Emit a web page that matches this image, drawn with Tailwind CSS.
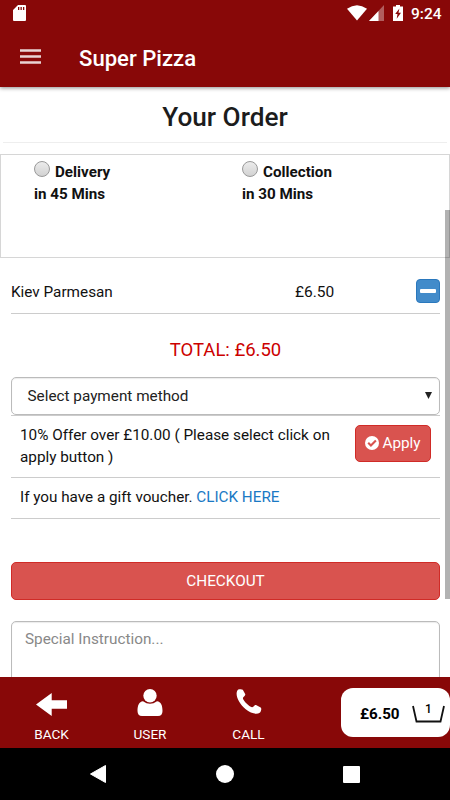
<!DOCTYPE html>
<html lang="en">
<head>
<meta charset="utf-8">
<title>Super Pizza</title>
<script src="https://cdn.jsdelivr.net/npm/@tailwindcss/browser@4"></script>
</head>
<body class="w-[450px] h-[800px] overflow-hidden bg-white text-[#111] font-[Roboto,sans-serif] text-[16px] leading-[22px]">
<div class="relative flex flex-col w-[450px] h-[800px] overflow-hidden">
  <header class="relative z-10 h-[87px] shrink-0 bg-[#880808] text-white shadow-[0_1px_4px_rgba(0,0,0,0.45)]">
    <div class="flex h-[27px] items-center justify-between pl-[13px] pr-[8px]">
      <svg class="w-[13px] h-[16px] -mt-px" viewBox="0 0 13 16"><path fill="#fff" fill-rule="evenodd" d="M5 0h7a1 1 0 0 1 1 1v14a1 1 0 0 1-1 1H1a1 1 0 0 1-1-1V5zM5 2v3h1.300V2zM7.500 2v3h1.300V2zM10 2v3h1.300V2z"/></svg>
      <div class="flex items-center -mt-px">
        <svg class="w-[20px] h-[16px]" viewBox="0 0 20 16"><path fill="#fff" d="M0 3.800Q10-3.500 20 3.800L10 15.500z"/></svg>
        <svg class="w-[15px] h-[16px] ml-[2px]" viewBox="0 0 15 16"><path fill="#fff" fill-opacity=".35" d="M15 0v16H0z"/><path fill="#fff" d="M9.500 6v10H0z"/></svg>
        <svg class="w-[10px] h-[16px] ml-[9px]" viewBox="0 0 10 16"><path fill="#fff" d="M3 0h4v1.500h3V16H0V1.500h3z"/><path fill="#880808" d="M6.400 3.500 2.200 9h2.300l-.8 4.700L8 7.800H5.500z"/></svg>
        <span class="ml-[8px] mt-[2px] w-[31px] text-[15.500px] font-medium whitespace-nowrap">9:24</span>
      </div>
    </div>
    <div class="flex h-[60px] items-center pl-[20px]">
      <svg class="w-[21px] h-[15px] -mt-px" viewBox="0 0 21 15"><path stroke="#e9d3d3" stroke-width="2.400" d="M0 1.500h21M0 7.500h21M0 13.500h21"/></svg>
      <h1 class="ml-[38px] mt-[2px] text-[22.100px] leading-[28px] font-medium">Super Pizza</h1>
    </div>
  </header>

  <main class="flex-1 min-h-0 overflow-hidden">
    <h2 class="mx-[3px] h-[56px] border-b border-[#eee] pt-[14px] text-center text-[26.200px] leading-[32px] font-medium text-[#1c1c1c]">Your Order</h2>
    <section class="mt-[11px] h-[104px] flex border border-[#d6d6d6] pl-[33px] pt-[6px] font-bold text-[15.200px]">
      <div class="w-[208px]">
        <div class="flex"><span class="size-[16px] rounded-full border border-[#999] bg-linear-to-b from-[#ececec] to-[#d2d2d2] mr-[5px]"></span><span>Delivery</span></div>
        <p>in 45 Mins</p>
      </div>
      <div>
        <div class="flex"><span class="size-[16px] rounded-full border border-[#999] bg-linear-to-b from-[#ececec] to-[#d2d2d2] mr-[5px]"></span><span>Collection</span></div>
        <p>in 30 Mins</p>
      </div>
    </section>
    <div class="ml-[11px] mr-[10px]">
      <div class="flex h-[56px] pt-[21px] items-start justify-between border-b border-[#ccc] text-[15.300px]">
        <span class="w-[284px] mt-[2px]">Kiev Parmesan</span>
        <span class="w-[121px] mt-[2px] text-[15.500px]">£6.50</span>
        <button class="flex w-[24px] h-[24px] items-center justify-center rounded-[4px] border border-[#2a78bd] bg-[#428bca]"><span class="h-[4px] w-[16px] rounded-[1px] bg-white"></span></button>
      </div>
      <p class="h-[63px] pt-[24px] text-center text-[18.500px] leading-[24px] text-[#cc0000]">TOTAL: £6.50</p>
      <div class="flex h-[38px] items-center justify-between rounded-[5px] border border-[#bbb] pb-px pl-[15.500px] pr-[7px] text-[15.300px] text-[#222] shadow-[inset_0_1px_1px_rgba(0,0,0,0.08)]">
        <span>Select payment method</span>
        <svg class="w-[7px] h-[7px]" viewBox="0 0 7 7"><path fill="#222" d="M0 0h7L3.500 7z"/></svg>
      </div>
      <div class="flex h-[63px] justify-between border-y border-[#ccc] pl-[9px] pr-[9px] pt-[8px] text-[15.300px]">
        <p class="w-[322px] whitespace-nowrap">10% Offer over £10.00 ( Please select click on<br>apply button )</p>
        <button class="mt-px flex h-[37px] w-[76px] items-center justify-center gap-[3px] rounded-[5px] border border-[#d02b27] bg-[#d9534f] pb-[2px] text-white">
          <svg class="w-[14px] h-[14px]" viewBox="0 0 14 14"><circle cx="7" cy="7" r="7" fill="#fff"/><path d="m3.200 6.800 2.700 2.700 5-5" fill="none" stroke="#d9534f" stroke-width="2.100"/></svg>
          <span>Apply</span>
        </button>
      </div>
      <p class="h-[41px] border-b border-[#ccc] pl-[9px] pt-[8px] text-[15.250px]">If you have a gift voucher. <a class="text-[#1a79c4]">CLICK HERE</a></p>
      <button class="mt-[43px] flex h-[38px] w-full items-center justify-center rounded-[5px] border border-[#d02b27] bg-[#d9534f] pb-px text-[15.300px] text-white">CHECKOUT</button>
      <div class="mt-[21px] h-[80px] rounded-[5px] border border-[#bbb] pl-[13px] pt-[6px] text-[15.300px] text-[#888] shadow-[inset_0_1px_1px_rgba(0,0,0,0.08)]">Special Instruction...</div>
    </div>
  </main>

  <footer class="flex h-[71px] shrink-0 bg-[#880808] text-white text-[13.600px] leading-[18px]">
    <div class="flex w-[103px] flex-col items-center pt-[12px]">
      <svg class="w-[31px] h-[30px]" viewBox="0 0 31 30"><path fill="#fff" d="M0 15.500 15.700 4v7.200H31v8.600H15.700V27z"/></svg>
      <span class="mt-[6px]">BACK</span>
    </div>
    <div class="flex w-[94px] flex-col items-center pt-[12px]">
      <svg class="w-[26px] h-[28px]" viewBox="0 0 26 28"><circle cx="13" cy="6.700" r="6.700" fill="#fff"/><path fill="#fff" d="M6 12.200Q13 17.300 20 12.200C24 12.500 25.500 16.500 25.500 22 25.500 25 24 27 21 27H5C2 27 .5 25 .5 22 .5 16.500 2 12.500 6 12.200z"/></svg>
      <span class="mt-[8px]">USER</span>
    </div>
    <div class="flex w-[103px] flex-col items-center pt-[12px]">
      <svg class="w-[26px] h-[26px]" viewBox="0 0 26 26"><path fill="#fff" d="M2.200.6C4 0 6 .1 6.800.7L9.300 5.200C9.600 7 6.800 7.700 6.900 9.500 7.500 12 13 17.500 16 18.200c2 .2 2.200-2.300 4-2.100l4.700 2.400c1.300 1 .2 4.500-1 5.300-3 2-9 .8-14.300-3.700C4.300 15.600.5 9.500.6 4.600.700 2.800 1.300 1.200 2.200.6z"/></svg>
      <span class="mt-[10px]">CALL</span>
    </div>
    <div class="ml-[41px] mt-[11px] flex h-[49px] w-[109px] shrink-0 items-center rounded-[12px] bg-white pl-[19px] text-black">
      <span class="w-[52px] text-[15.200px] font-bold mt-[2px]">£6.50</span>
      <div class="relative h-[20px] w-[33px] mt-[2px]">
        <svg class="w-[33px] h-[20px]" viewBox="0 0 33 20"><path d="m1 2 3.500 15.500h24L32 2" fill="none" stroke="#111" stroke-width="1.800"/></svg>
        <span class="absolute inset-x-0 top-[-2px] text-center text-[12px] leading-[14px] font-medium">1</span>
      </div>
    </div>
  </footer>

  <nav class="flex h-[52px] shrink-0 items-center bg-black">
    <svg class="ml-[90px] w-[16px] h-[18px]" viewBox="0 0 16 18"><path fill="#fff" stroke="#fff" stroke-linejoin="round" d="M15.500.5v17L.5 9z"/></svg>
    <span class="ml-[110px] size-[18px] rounded-full bg-white"></span>
    <span class="ml-[109px] size-[17px] rounded-[1px] bg-white"></span>
  </nav>
  <div class="absolute left-[445px] top-[210px] h-[389px] w-[5px] bg-black/30"></div>
</div>
</body>
</html>
